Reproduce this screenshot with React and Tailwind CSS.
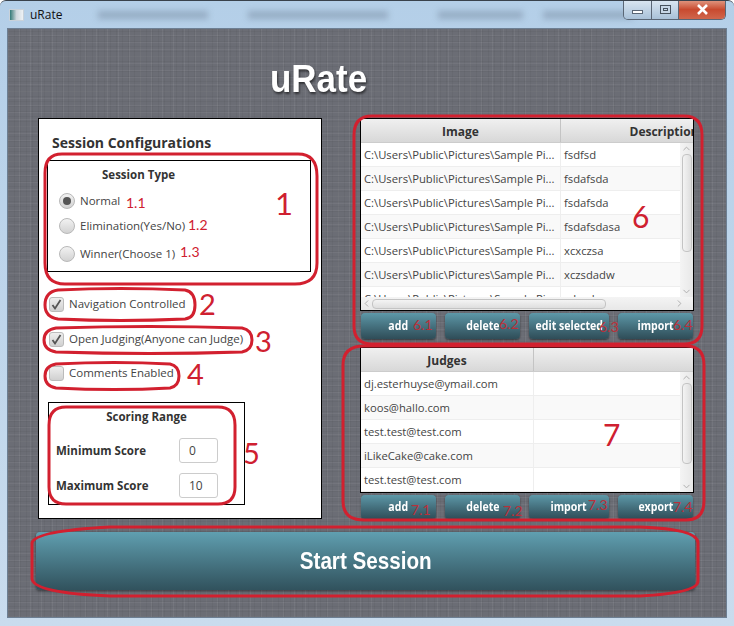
import React from "react";
import { ChevronUp, ChevronDown, ChevronLeft, ChevronRight } from "lucide-react";

const IMAGE_ROWS = ["fsdfsd", "fsdafsda", "fsdafsda", "fsdafsdasa", "xcxczsa", "xczsdadw", "sdasd"];
const JUDGES = ["dj.esterhuyse@ymail.com", "koos@hallo.com", "test.test@test.com", "iLikeCake@cake.com", "test.test@test.com"];

// red notes drawn on top of the screenshot
const NOTES = [
  { text: "1", cls: "left-[275px] top-[187px] text-[31px] text-[#cf2030]" },
  { text: "1.1", cls: "left-[126px] top-[195px] text-[14px] text-[#cf2030]" },
  { text: "1.2", cls: "left-[188px] top-[217px] text-[14px] text-[#cf2030]" },
  { text: "1.3", cls: "left-[180px] top-[244px] text-[14px] text-[#cf2030]" },
  { text: "2", cls: "left-[199px] top-[288px] text-[29px] text-[#cf2030]" },
  { text: "3", cls: "left-[255px] top-[325px] text-[29px] text-[#cf2030]" },
  { text: "4", cls: "left-[187px] top-[358px] text-[29px] text-[#cf2030]" },
  { text: "5", cls: "left-[243px] top-[437px] text-[29px] text-[#cf2030]" },
  { text: "6", cls: "left-[632px] top-[200px] text-[30px] text-[#cf2030]" },
  { text: "7", cls: "left-[603px] top-[418px] text-[30px] text-[#cf2030]" },
  { text: "6.1", cls: "left-[413px] top-[317px] text-[14px] text-[#b8303a]" },
  { text: "6.2", cls: "left-[499px] top-[316px] text-[14px] text-[#b8303a]" },
  { text: "6.3", cls: "left-[599px] top-[319px] text-[14px] text-[#b8303a]" },
  { text: "6.4", cls: "left-[673px] top-[317px] text-[14px] text-[#b8303a]" },
  { text: "7.1", cls: "left-[411px] top-[502px] text-[14px] text-[#b8303a]" },
  { text: "7.2", cls: "left-[503px] top-[503px] text-[14px] text-[#b8303a]" },
  { text: "7.3", cls: "left-[588px] top-[497px] text-[14px] text-[#b8303a]" },
  { text: "7.4", cls: "left-[673px] top-[499px] text-[14px] text-[#b8303a]" },
];

function Radio({ checked, label, className }) {
  return (
    <div className={`flex items-center gap-[5px] h-5 ${className}`}>
      <span className="w-4 h-4 rounded-full border border-[#b8b8b8] bg-gradient-to-b from-[#f2f2f2] to-[#d2d2d2] flex items-center justify-center">
        {checked && <span className="w-2 h-2 rounded-full bg-[#555]" />}
      </span>
      <span className="text-[11.5px] text-[#444]">{label}</span>
    </div>
  );
}

function Check({ checked, label, className }) {
  return (
    <div className={`flex items-center gap-[5px] h-5 ml-[10px] ${className}`}>
      <span className="w-[15px] h-[15px] rounded-[3px] border border-[#bbb] bg-gradient-to-b from-[#eee] to-[#d0d0d0] flex items-center justify-center">
        {checked && (
          <svg width="13" height="13" viewBox="0 0 13 13" fill="none">
            <path d="M2.5 7 L5 10.5 L10.5 2" stroke="#555" strokeWidth="1.8" />
          </svg>
        )}
      </span>
      <span className="text-[11.5px] text-[#444] whitespace-nowrap">{label}</span>
    </div>
  );
}

function ScoreRow({ label, value, className }) {
  return (
    <div className={`flex items-center h-[25px] pl-[7px] ${className}`}>
      <span className="w-[123px] text-[11.5px] font-bold text-[#333]">{label}</span>
      <span className="w-[39px] h-[25px] rounded-[3px] border border-[#ccc] bg-white pl-[9px] text-[12px] leading-[23px] text-[#444]">
        {value}
      </span>
    </div>
  );
}

function VScroll({ thumbHeight }) {
  return (
    <div className="w-[13px] shrink-0 bg-gradient-to-r from-[#f4f4f4] to-[#e8e8e8] flex flex-col items-center">
      <ChevronUp size={11} className="text-[#aaa] h-[11px] shrink-0" />
      <div
        className="w-[10px] rounded-[4px] border border-[#c4c4c4] bg-gradient-to-r from-[#f4f4f4] to-[#dedede] shrink-0"
        style={{ height: thumbHeight }}
      />
      <div className="flex-1" />
      <ChevronDown size={11} className="text-[#aaa] h-[11px] shrink-0" />
    </div>
  );
}

function Header({ first, second, firstWidth, secondWidth }) {
  return (
    <div className="flex h-6 overflow-hidden bg-gradient-to-b from-[#f0f0f0] to-[#d8d8d8] border-b border-[#ccc] text-[12px] font-bold text-[#333] shrink-0">
      <div className={`${firstWidth} shrink-0 text-center leading-[25px] border-r border-[#c4c4c4]`}>{first}</div>
      <div className={`${secondWidth} shrink-0 text-center leading-[25px]`}>{second}</div>
    </div>
  );
}

function ImageTable() {
  return (
    <div className="h-[193px] border border-black bg-white flex flex-col">
      <Header first="Image" second="Description" firstWidth="w-[200px]" secondWidth="w-[206px]" />
      <div className="flex h-[154px]">
        <div className="flex-1 overflow-hidden">
          {IMAGE_ROWS.map((d, i) => (
            <div key={i} className={`flex h-6 shrink-0 border-b border-[#eee] text-[11.25px] text-[#444] leading-[23px] ${i % 2 ? "bg-[#f9f9f9]" : "bg-white"}`}>
              <div className="w-[200px] pl-[3px] border-r border-[#eee] whitespace-nowrap">
                C:\Users\Public\Pictures\Sample Pi...
              </div>
              <div className="pl-[3px]">{d}</div>
            </div>
          ))}
        </div>
        <VScroll thumbHeight={98} />
      </div>
      <div className="h-[13px] flex items-center bg-gradient-to-b from-[#f4f4f4] to-[#e8e8e8] shrink-0">
        <ChevronLeft size={11} className="text-[#aaa] w-[11px] shrink-0" />
        <div className="w-[234px] h-[10px] rounded-[4px] border border-[#c4c4c4] bg-gradient-to-b from-[#f4f4f4] to-[#dedede]" />
        <div className="flex-1" />
        <ChevronRight size={11} className="text-[#aaa] w-[11px] shrink-0 mr-[8px]" />
      </div>
    </div>
  );
}

function JudgesTable() {
  return (
    <div className="h-[146px] border border-black bg-white flex flex-col">
      <Header first="Judges" second="" firstWidth="w-[173px]" secondWidth="flex-1" />
      <div className="flex flex-1 overflow-hidden">
        <div className="flex-1 overflow-hidden">
          {JUDGES.map((j, i) => (
            <div key={i} className={`flex h-6 border-b border-[#eee] text-[11.25px] text-[#444] leading-[23px] ${i % 2 ? "bg-[#f9f9f9]" : "bg-white"}`}>
              <div className="w-[173px] pl-[3px] border-r border-[#eee]">{j}</div>
            </div>
          ))}
        </div>
        <VScroll thumbHeight={81} />
      </div>
    </div>
  );
}

function TealButton({ label, className }) {
  return (
    <div className={`rounded-[4px] bg-gradient-to-b from-[#5d98a8] to-[#2f4d58] shadow-[0_1px_2px_rgba(0,0,0,0.5)] flex items-center justify-center ${className}`}>
      <span className="text-[12px] font-bold text-white scale-x-[0.88] whitespace-nowrap">{label}</span>
    </div>
  );
}

function ButtonRow({ labels, height, className }) {
  return (
    <div className={`flex gap-[9px] ml-px ${height} ${className}`}>
      <TealButton label={labels[0]} className="w-[75px]" />
      <TealButton label={labels[1]} className="w-[75px]" />
      <TealButton label={labels[2]} className="w-[80px]" />
      <TealButton label={labels[3]} className="w-[75px]" />
    </div>
  );
}

export default function App() {
  return (
    <div className="relative w-[734px] h-[626px] overflow-hidden bg-gradient-to-b from-[#b4cfe8] to-[#c9dcee] font-['Open_Sans','Noto_Sans',sans-serif] rounded-t-[6px] border-t border-[#39424c]">
      {/* title bar */}
      <div className="h-[27px] flex items-center relative">
        <div className="ml-[9px] w-[15px] h-[12px] bg-gradient-to-r from-[#2f7a78] via-[#cfd8de] to-[#eef2f5] border border-[#c9d2da]" />
        <span className="ml-[6px] text-[12px] text-[#111]">uRate</span>
        <div className="ml-[36px] w-[110px] h-[8px] bg-[#66788c]/40 blur-[3px]" />
        <div className="ml-[40px] w-[140px] h-[8px] bg-[#66788c]/40 blur-[3px]" />
        <div className="ml-[50px] w-[85px] h-[8px] bg-[#66788c]/40 blur-[3px]" />
        <div className="ml-[20px] w-[90px] h-[8px] bg-[#66788c]/40 blur-[3px]" />
        {/* window buttons */}
        <div className="absolute left-[623px] -top-px flex h-[20px] w-[103px] rounded-b-[5px] border border-t-0 border-[#5a6675] overflow-hidden">
          <div className="w-[28px] bg-gradient-to-b from-[#dbe7f2] to-[#a9c1d8] border-r border-[#5a6675] flex items-center justify-center">
            <span className="w-[11px] h-[4px] mt-[5px] bg-white border border-[#5a6675]" />
          </div>
          <div className="w-[27px] bg-gradient-to-b from-[#dbe7f2] to-[#a9c1d8] border-r border-[#5a6675] flex items-center justify-center">
            <span className="w-[11px] h-[9px] border border-[#47525e] bg-[#c6d6e6] flex items-center justify-center">
              <span className="w-[5px] h-[3px] border border-[#47525e]" />
            </span>
          </div>
          <div className="flex-1 bg-gradient-to-b from-[#e09a84] via-[#c84a2f] to-[#d0664c] flex items-center justify-center">
            <svg width="13" height="11" viewBox="0 0 13 11">
              <path d="M2 1 L11 10 M11 1 L2 10" stroke="#fff" strokeWidth="2.6" />
            </svg>
          </div>
        </div>
      </div>

      {/* client area */}
      <div className="mx-[7px] h-[590px] border border-[#6d7f93] bg-[#6b6d75] bg-[image:repeating-linear-gradient(0deg,rgba(255,255,255,0.05)_0px,rgba(255,255,255,0.05)_1px,transparent_1px,transparent_7px),repeating-linear-gradient(0deg,rgba(0,0,0,0.04)_0px,rgba(0,0,0,0.04)_1px,transparent_1px,transparent_5px),repeating-linear-gradient(90deg,rgba(255,255,255,0.06)_0px,rgba(255,255,255,0.06)_1px,transparent_1px,transparent_11px),repeating-linear-gradient(90deg,rgba(0,0,0,0.04)_0px,rgba(0,0,0,0.04)_1px,transparent_1px,transparent_6px)]">
        <div className="h-[89px] pl-[262px] pt-[27px]">
          <h1 className="font-['Liberation_Sans',Arial,sans-serif] font-bold text-[38px] leading-[46px] text-white origin-left scale-x-[0.92] drop-shadow-[1px_2px_1px_rgba(0,0,0,0.55)]">
            uRate
          </h1>
        </div>

        <div className="flex ml-[30px] h-[401px]">
          {/* left panel */}
          <div className="w-[284px] border border-black bg-white">
            <h2 className="mt-[14px] ml-[13px] text-[14px] leading-5 font-bold text-[#333]">Session Configurations</h2>
            <div className="mt-[7px] ml-[8px] w-[264px] h-[112px] border border-black">
              <div className="mt-1 ml-[54px] text-[11.5px] leading-5 font-bold text-[#333]">Session Type</div>
              <Radio checked label="Normal" className="mt-[6px] ml-[11px]" />
              <Radio label="Elimination(Yes/No)" className="mt-[5px] ml-[11px]" />
              <Radio label="Winner(Choose 1)" className="mt-[8px] ml-[11px]" />
            </div>
            <Check checked label="Navigation Controlled" className="mt-[22px]" />
            <Check checked label="Open Judging(Anyone can Judge)" className="mt-[15px]" />
            <Check label="Comments Enabled" className="mt-[14px]" />
            <div className="mt-[19px] ml-[9px] w-[197px] h-[103px] border border-black">
              <div className="mt-1 text-center text-[11.5px] leading-5 font-bold text-[#333]">Scoring Range</div>
              <ScoreRow label="Minimum Score" value="0" className="mt-[11px]" />
              <ScoreRow label="Maximum Score" value="10" className="mt-[10px]" />
            </div>
          </div>

          {/* right column */}
          <div className="ml-[38px] w-[334px]">
            <ImageTable />
            <ButtonRow labels={["add", "delete", "edit selected", "import"]} height="h-[26px]" className="mt-[2px]" />
            <div className="mt-[8px]">
              <JudgesTable />
            </div>
            <ButtonRow labels={["add", "delete", "import", "export"]} height="h-[24px]" className="mt-[2px]" />
          </div>
        </div>

        <div className="mt-[13px] ml-[28px] w-[659px] h-[58px] rounded-[4px] bg-gradient-to-b from-[#609fb0] to-[#31525d] shadow-[0_1px_3px_rgba(0,0,0,0.5)] flex items-center justify-center">
          <span className="font-['Liberation_Sans',Arial,sans-serif] font-bold text-[24px] text-white scale-x-[0.86] whitespace-nowrap">
            Start Session
          </span>
        </div>
      </div>

      {/* red annotations */}
      <svg className="absolute left-0 top-0 pointer-events-none" width="734" height="626" fill="none" stroke="#d2202f" strokeWidth="3">
        <path d="M62 153 H298 Q317 153 317 175 V262 Q317 283 295 283 H65 Q45 283 45 262 V172 Q45 153 62 153 Z" />
        <path d="M58 289 Q120 286 185 289 Q195 291 195 304 Q195 317 185 318 Q120 321 58 318 Q45 316 45 304 Q45 291 58 289 Z" />
        <path d="M56 327 Q150 324 242 327 Q252 329 252 339 Q252 349 242 351 Q150 354 56 351 Q44 349 44 339 Q44 329 56 327 Z" />
        <path d="M56 363 Q115 360 170 363 Q179 365 179 375 Q179 385 170 387 Q115 390 56 387 Q45 385 45 375 Q45 365 56 363 Z" />
        <path d="M66 406 H218 Q235 406 235 424 V486 Q235 503 218 503 H66 Q49 503 49 486 V424 Q49 406 66 406 Z" />
        <path d="M372 115 H684 Q702 115 702 134 V325 Q702 343 684 343 H372 Q354 343 354 325 V134 Q354 115 372 115 Z" />
        <path d="M364 345 H686 Q704 345 704 364 V500 Q704 519 686 519 H364 Q343 519 343 500 V364 Q343 345 364 345 Z" />
        <path d="M110 526 H640 Q698 528 698 542 V580 Q698 592 640 595 H110 Q34 592 32 578 V542 Q34 530 110 526 Z" />
      </svg>
      {NOTES.map((n) => (
        <span key={n.text} className={`absolute font-['Lato',sans-serif] leading-none ${n.cls}`}>
          {n.text}
        </span>
      ))}
    </div>
  );
}
